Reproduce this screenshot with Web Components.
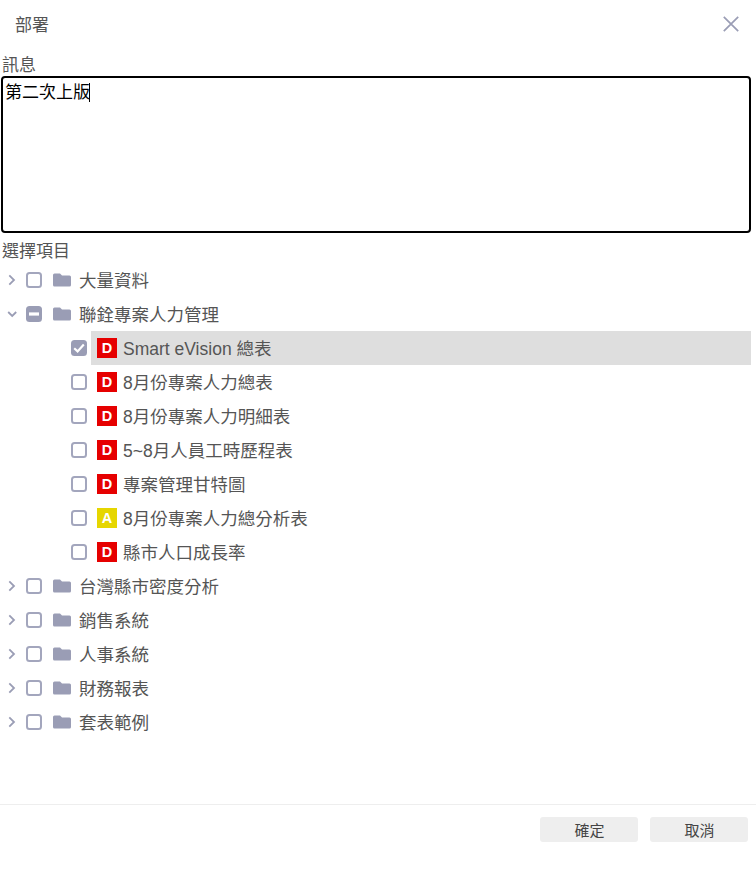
<!DOCTYPE html>
<html lang="zh-Hant"><head><meta charset="utf-8">
<style>
html,body{margin:0;padding:0;background:#fff}
body{font-family:"Liberation Sans","Noto Sans CJK TC",sans-serif;width:756px;height:870px;overflow:hidden}
</style></head><body>
<deploy-dialog>
  <span slot="title">部署</span>
  <msg-field label="訊息" value="第二次上版"></msg-field>
  <tree-select label="選擇項目">
    <tree-row kind="folder" state="none" arrow="right">大量資料</tree-row>
    <tree-row kind="folder" state="partial" arrow="down">聯銓專案人力管理</tree-row>
    <tree-row kind="item" state="checked" badge="D" selected>Smart eVision 總表</tree-row>
    <tree-row kind="item" state="none" badge="D">8月份專案人力總表</tree-row>
    <tree-row kind="item" state="none" badge="D">8月份專案人力明細表</tree-row>
    <tree-row kind="item" state="none" badge="D">5~8月人員工時歷程表</tree-row>
    <tree-row kind="item" state="none" badge="D">專案管理甘特圖</tree-row>
    <tree-row kind="item" state="none" badge="A">8月份專案人力總分析表</tree-row>
    <tree-row kind="item" state="none" badge="D">縣市人口成長率</tree-row>
    <tree-row kind="folder" state="none" arrow="right">台灣縣市密度分析</tree-row>
    <tree-row kind="folder" state="none" arrow="right">銷售系統</tree-row>
    <tree-row kind="folder" state="none" arrow="right">人事系統</tree-row>
    <tree-row kind="folder" state="none" arrow="right">財務報表</tree-row>
    <tree-row kind="folder" state="none" arrow="right">套表範例</tree-row>
  </tree-select>
  <dlg-button slot="actions">確定</dlg-button>
  <dlg-button slot="actions">取消</dlg-button>
</deploy-dialog>
<script>
function def(name, html, init){
  customElements.define(name, class extends HTMLElement{
    connectedCallback(){
      if(this.shadowRoot) return;
      const r=this.attachShadow({mode:'open'});
      r.innerHTML = typeof html==='function' ? html(this) : html;
    }
  });
}
def('deploy-dialog',`<style>
:host{display:flex;flex-direction:column;width:756px;height:870px;color:#555;font-size:17px;box-sizing:border-box}
header{display:flex;align-items:center;justify-content:space-between;height:47px;padding:0 15px;flex:none}
svg{display:block;margin-right:1px;margin-top:1px}
main{flex:1;padding:1px 5px 0 1px;min-height:0}
footer{flex:none;height:66px;box-sizing:border-box;border-top:1px solid #eee;display:flex;justify-content:flex-end;gap:12px;padding:12px 8px 0 0}
</style>
<header><slot name="title"></slot>
<svg width="18" height="18" viewBox="0 0 18 18" fill="none" stroke="#9a9db5" stroke-width="1.7"><path d="M1.8 1.8 16.2 16.2M16.2 1.8 1.8 16.2"/></svg></header>
<main><slot></slot></main>
<footer><slot name="actions"></slot></footer>`);
def('msg-field',h=>`<style>
:host{display:block}
label{display:block;height:28px;line-height:35px;padding-left:1px;box-sizing:border-box;color:#555}
.box{box-sizing:border-box;height:157px;border:2px solid #000;border-radius:4px;padding:4px 2px 2px;color:#000;line-height:22px;font-size:17px;display:block}
i{display:inline-block;width:1px;height:19px;margin-left:-1px;background:#000;vertical-align:-4px}
</style><label>${h.getAttribute('label')}</label><div class="box">${h.getAttribute('value')}<i></i></div>`);
def('tree-select',h=>`<style>
:host{display:block}
.l{height:30px;line-height:38px;padding-left:1px;color:#555;box-sizing:border-box}
</style><div class="l">${h.getAttribute('label')}</div><slot></slot>`);
const CHK={
 none:`<rect x="1" y="1" width="14" height="14" rx="2.5" fill="#fff" stroke="#a3a6bd" stroke-width="2"/>`,
 partial:`<rect x="0" y="0" width="16" height="16" rx="3.5" fill="#9a9db5"/><rect x="3" y="6.4" width="10" height="3.2" fill="#fff"/>`,
 checked:`<rect x="0" y="0" width="16" height="16" rx="3.5" fill="#9a9db5"/><path d="M3.2 8.2 6.6 11.4 12.8 4.6" fill="none" stroke="#fff" stroke-width="2.2"/>`
};
const ARROW={
 right:`<path d="M6.3 3.3 11 8 6.3 12.7" fill="none" stroke="#9a9db5" stroke-width="1.8"/>`,
 down:`<path d="M5.2 6 9.2 10 13.2 6" fill="none" stroke="#9a9db5" stroke-width="1.8"/>`
};
def('tree-row',h=>{
 const k=h.getAttribute('kind'),s=h.getAttribute('state'),b=h.getAttribute('badge');
 const chk=`<svg class="c" width="16" height="16" viewBox="0 0 16 16">${CHK[s]}</svg>`;
 const css=`<style>
:host{display:flex;align-items:center;height:34px;font-size:17.5px;color:#555}
svg{display:block;flex:none}
.body{display:flex;align-items:center;height:34px;flex:1;padding-left:6px}
.body.sel{background:#dedede}
.b{width:20px;height:20px;flex:none;display:flex;align-items:center;justify-content:center;color:#fff;font-weight:700;font-size:14.5px;line-height:1}
.t{white-space:nowrap;position:relative;top:-1px}
</style>`;
 if(k==='folder') return css+`<svg style="margin-left:2px" width="16" height="16" viewBox="0 0 16 16">${ARROW[h.getAttribute('arrow')]}</svg>
 <span style="width:7px"></span>${chk}
 <svg style="margin-left:11px;margin-right:8px" width="18" height="14" viewBox="0 0 18 14"><path d="M0 2a1.5 1.5 0 0 1 1.5-1.5H7L9 2.5h7.5A1.5 1.5 0 0 1 18 4v8a1.5 1.5 0 0 1-1.5 1.5h-15A1.5 1.5 0 0 1 0 12z" fill="#9a9db5"/></svg>
 <span class="t"><slot></slot></span>`;
 return css+`<span style="width:70px"></span>${chk}<span style="width:4px"></span>
 <div class="body ${h.hasAttribute('selected')?'sel':''}"><span class="b" style="background:${b==='A'?'#e6d600':'#e60000'}">${b}</span>
 <span class="t" style="margin-left:6px"><slot></slot></span></div>`;
});
def('dlg-button',`<style>
:host{display:flex;align-items:center;justify-content:center;box-sizing:border-box;padding-left:1px;width:98px;height:25px;background:#eee;border-radius:3px;font-size:15px;color:#444}
</style><slot></slot>`);
</script>
</body></html>
